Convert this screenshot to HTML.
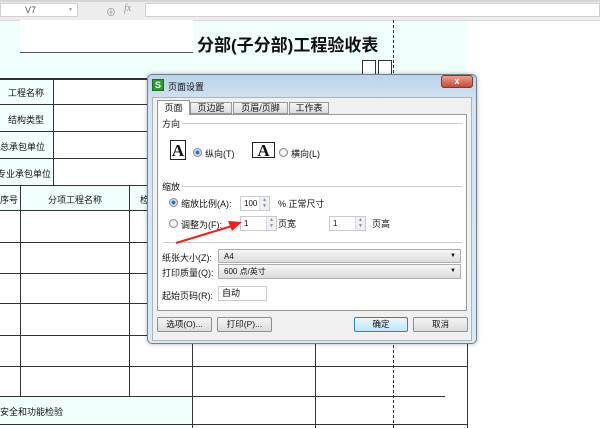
<!DOCTYPE html>
<html><head><meta charset="utf-8"><style>
*{margin:0;padding:0;box-sizing:border-box}
body{width:600px;height:428px;overflow:hidden;background:#fff;position:relative;font-family:"Liberation Sans","Noto Sans CJK SC",sans-serif;font-size:9px;color:#111}
.a{position:absolute}
.h{position:absolute;height:1px;background:#333}
.v{position:absolute;width:1px;background:#333}
.cy{position:absolute;background:#f1fefe}
.t{position:absolute;white-space:nowrap;font-size:9px}
.inp{position:absolute;background:#fff;border:1px solid #c8ccd2;font-size:8px;padding-left:3px;line-height:13px}
.spin{position:absolute;right:0;top:0;width:10px;height:100%;border-left:1px solid #d8dce2;background:#eef0f4;font-size:5px;color:#7a8aa8;text-align:center;line-height:6px}
.sel{position:absolute;border:1px solid #a9aeb6;background:linear-gradient(#f6f6f6,#dcdcdc);font-size:8px;padding-left:5px;line-height:13px}
.sel:after{content:"▼";position:absolute;right:4px;top:0;font-size:6px}
.btn{position:absolute;height:15px;border:1px solid #8e8f8f;border-radius:2px;background:linear-gradient(#f4f4f4,#dcdcdc);text-align:center;font-size:8.5px;line-height:13px}
.rad{position:absolute;width:9px;height:9px;border-radius:50%;border:1px solid #8a8a8a;background:radial-gradient(#fff,#ddd)}
.rad.on{background:radial-gradient(#2a6fbf 35%,#cfe3f5 45%)}
.pg{position:absolute;width:16px;height:20px;border:1px solid #222;background:#fff;font-family:"Liberation Serif",serif;font-size:17px;font-weight:bold;text-align:center;line-height:20px}
.pg2{width:23px;height:16px;line-height:16px}
</style></head><body>
<div class="a" style="left:0;top:0;width:600px;height:21px;background:#ededed;border-bottom:1px solid #d8d8d8"></div>
<div class="a" style="left:0;top:0;width:600px;height:2px;background:#d4d4d4"></div>
<div class="a" style="left:0;top:3px;width:78px;height:14px;background:#fff;border:1px solid #d0d0d0;font-size:9px;color:#555;padding-left:24px;line-height:12px">V7<span style="position:absolute;right:4px;font-size:5px;color:#999">▼</span></div>
<div class="t" style="left:106px;top:4px;color:#999;font-size:10px">⊕</div>
<div class="t" style="left:124px;top:3px;color:#999;font-style:italic;font-family:'Liberation Serif',serif;font-size:10px">fx</div>
<div class="a" style="left:145px;top:3px;width:455px;height:14px;background:#fff;border:1px solid #d0d0d0"></div>
<div class="cy" style="left:0;top:21px;width:167px;height:57px"></div>
<div class="cy" style="left:167px;top:21px;width:300px;height:57px"></div>
<div class="cy" style="left:0;top:78px;width:53px;height:107px"></div>
<div class="cy" style="left:0;top:185px;width:160px;height:25px"></div>
<div class="cy" style="left:0;top:397px;width:192px;height:27px"></div>
<div class="a" style="left:20px;top:20px;width:173px;height:33px;background:#fff;border-bottom:1px solid #555"></div>
<div class="t" style="left:197px;top:31px;font-size:17px;font-weight:bold">分部(子分部)工程验收表</div>
<div class="a" style="left:362px;top:60px;width:14px;height:16px;border:1px solid #333;border-bottom:none;background:#fff"></div>
<div class="a" style="left:378px;top:60px;width:14px;height:16px;border:1px solid #333;border-bottom:none;background:#fff"></div>
<div class="a" style="left:393px;top:20px;height:408px;border-left:1px dashed #333"></div>
<div class="h" style="left:0;top:78px;width:467px;height:2px"></div>
<div class="h" style="left:0;top:104px;width:467px"></div>
<div class="h" style="left:0;top:131px;width:467px"></div>
<div class="h" style="left:0;top:158px;width:467px"></div>
<div class="h" style="left:0;top:185px;width:467px"></div>
<div class="h" style="left:0;top:210px;width:467px"></div>
<div class="h" style="left:0;top:242px;width:467px"></div>
<div class="h" style="left:0;top:273px;width:467px"></div>
<div class="h" style="left:0;top:303px;width:467px"></div>
<div class="h" style="left:0;top:335px;width:467px"></div>
<div class="h" style="left:0;top:366px;width:467px"></div>
<div class="h" style="left:0;top:396px;width:445px"></div>
<div class="h" style="left:0;top:424px;width:467px"></div>
<div class="v" style="left:53px;top:78px;height:107px"></div>
<div class="v" style="left:20px;top:185px;height:211px"></div>
<div class="v" style="left:129px;top:185px;height:211px"></div>
<div class="v" style="left:192px;top:185px;height:243px"></div>
<div class="v" style="left:315px;top:185px;height:243px"></div>
<div class="v" style="left:467px;top:78px;height:350px"></div>
<div class="t" style="left:8px;top:86px">工程名称</div>
<div class="t" style="left:8px;top:113px">结构类型</div>
<div class="t" style="left:0;top:140px">总承包单位</div>
<div class="t" style="left:-3px;top:167px">专业承包单位</div>
<div class="t" style="left:0;top:193px">序号</div>
<div class="t" style="left:48px;top:193px">分项工程名称</div>
<div class="t" style="left:140px;top:193px">检</div>
<div class="t" style="left:0;top:405px">安全和功能检验</div>
<div class="a" style="left:147px;top:74px;width:330px;height:270px;border:1px solid #6d7f95;border-radius:5px;background:linear-gradient(#bcd3ea,#d6e4f2 30px,#dbe7f3);box-shadow:0 0 4px rgba(0,0,0,.3)"></div>
<div class="a" style="left:152px;top:79px;width:12px;height:12px;background:#2f9a2f;border:1px solid #1e6e1e;color:#fff;font-size:9px;font-weight:bold;text-align:center;line-height:10px">S</div>
<div class="t" style="left:168px;top:80px;font-size:9px">页面设置</div>
<div class="a" style="left:441px;top:75px;width:32px;height:13px;border:1px solid #7a3a30;border-radius:3px;background:linear-gradient(#e8a090,#c84a3a);color:#fff;font-size:9px;font-weight:bold;text-align:center;line-height:11px">x</div>
<div class="a" style="left:152px;top:97px;width:320px;height:244px;background:#f0f0f0;border:1px solid #a8b4c0"></div>
<div class="a" style="left:157px;top:100px;width:33px;height:15px;background:#fff;border:1px solid #999;border-bottom:none;font-size:9px;text-align:center;line-height:14px;z-index:2">页面</div>
<div class="a" style="left:190px;top:102px;width:42px;height:12px;background:linear-gradient(#f4f4f4,#ddd);border:1px solid #999;font-size:9px;text-align:center;line-height:11px">页边距</div>
<div class="a" style="left:233px;top:102px;width:55px;height:12px;background:linear-gradient(#f4f4f4,#ddd);border:1px solid #999;font-size:9px;text-align:center;line-height:11px">页眉/页脚</div>
<div class="a" style="left:289px;top:102px;width:40px;height:12px;background:linear-gradient(#f4f4f4,#ddd);border:1px solid #999;font-size:9px;text-align:center;line-height:11px">工作表</div>
<div class="a" style="left:157px;top:114px;width:310px;height:197px;background:#fff;border:1px solid #999"></div>
<div class="t" style="left:162px;top:117px">方向</div>
<div class="a" style="left:182px;top:123px;width:280px;height:1px;background:#ccc"></div>
<div class="pg" style="left:170px;top:140px">A</div>
<div class="rad on" style="left:193px;top:148px"></div>
<div class="t" style="left:205px;top:147px">纵向(T)</div>
<div class="pg pg2" style="left:252px;top:142px">A</div>
<div class="rad" style="left:279px;top:148px"></div>
<div class="t" style="left:291px;top:147px">横向(L)</div>
<div class="t" style="left:162px;top:180px">缩放</div>
<div class="a" style="left:182px;top:186px;width:280px;height:1px;background:#ccc"></div>
<div class="rad on" style="left:169px;top:198px"></div>
<div class="t" style="left:181px;top:197px">缩放比例(A):</div>
<div class="inp" style="left:240px;top:196px;width:30px;height:15px">100<div class="spin">▲<br>▼</div></div>
<div class="t" style="left:278px;top:197px">% 正常尺寸</div>
<div class="rad" style="left:169px;top:219px"></div>
<div class="t" style="left:181px;top:218px">调整为(F):</div>
<div class="inp" style="left:240px;top:216px;width:37px;height:15px">1<div class="spin">▲<br>▼</div></div>
<div class="t" style="left:278px;top:217px">页宽</div>
<div class="inp" style="left:329px;top:216px;width:37px;height:15px">1<div class="spin">▲<br>▼</div></div>
<div class="t" style="left:372px;top:217px">页高</div>
<div class="a" style="left:163px;top:242px;width:299px;height:1px;background:#ccc"></div>
<div class="t" style="left:162px;top:251px">纸张大小(Z):</div>
<div class="sel" style="left:218px;top:249px;width:243px;height:14px">A4</div>
<div class="t" style="left:162px;top:266px">打印质量(Q):</div>
<div class="sel" style="left:218px;top:264px;width:243px;height:15px">600 点/英寸</div>
<div class="t" style="left:162px;top:289px">起始页码(R):</div>
<div class="inp" style="left:218px;top:286px;width:49px;height:15px;font-size:9px">自动</div>
<div class="btn" style="left:157px;top:317px;width:55px">选项(O)...</div>
<div class="btn" style="left:217px;top:317px;width:55px">打印(P)...</div>
<div class="btn" style="left:354px;top:317px;width:54px;border-color:#3c7fb1;background:linear-gradient(#eaf6fd,#bee6fd)">确定</div>
<div class="btn" style="left:413px;top:317px;width:55px">取消</div>
<svg class="a" style="left:0;top:0" width="600" height="428"><line x1="176" y1="243" x2="232" y2="226" stroke="#e8231c" stroke-width="2"/><polygon points="242,222 228,221 232,231" fill="#e8231c"/></svg>
</body></html>
